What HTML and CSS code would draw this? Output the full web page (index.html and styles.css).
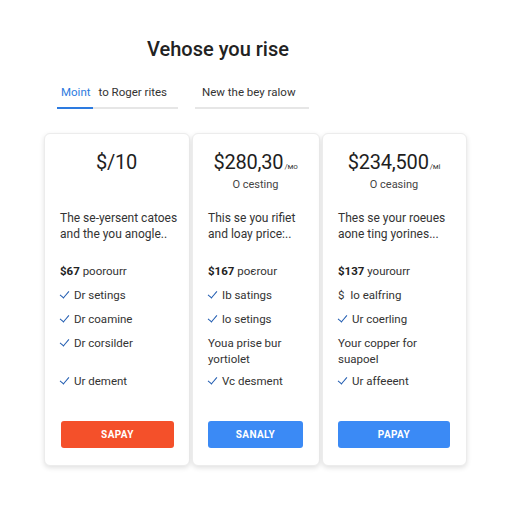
FILE: index.html
```html
<!DOCTYPE html>
<html>
<head>
<meta charset="utf-8">
<link rel="stylesheet" href="styles.css">
</head>
<body>
<div class="page">
  <h1 class="title">Vehose you rise</h1>
  <div class="tabs">
    <div class="tab tab-first">
      <span class="tab-active">Moint</span><span class="tab-rest">to Roger rites</span>
      <div class="tab-line"><div class="tab-line-active"></div></div>
    </div>
    <div class="tab tab-second">
      <span class="tab-rest">New the bey ralow</span>
      <div class="tab-line"></div>
    </div>
  </div>
  <div class="cards">
    <div class="card">
      <div class="price">$/10</div>
      <div class="sub">&nbsp;</div>
      <p class="desc">The se-yersent catoes<br>and the you anogle..</p>
      <ul class="features">
        <li class="lead"><b>$67</b> poorourr</li>
        <li class="check">Dr setings</li>
        <li class="check">Dr coamine</li>
        <li class="check tall">Dr corsilder</li>
        <li class="check">Ur dement</li>
      </ul>
      <button class="btn btn-red">SAPAY</button>
    </div>
    <div class="card">
      <div class="price">$280,30<span class="per">/мо</span></div>
      <div class="sub">O cesting</div>
      <p class="desc">This se you rifiet<br>and loay price:..</p>
      <ul class="features">
        <li class="lead"><b>$167</b> poєrour</li>
        <li class="check">Ib satings</li>
        <li class="check">lo setings</li>
        <li class="plain tall">Youa prise bur<br>yortiolet</li>
        <li class="check">Vc desment</li>
      </ul>
      <button class="btn btn-blue">SANALY</button>
    </div>
    <div class="card">
      <div class="price">$234,500<span class="per">/мі</span></div>
      <div class="sub">O ceasing</div>
      <p class="desc">Thes se your roeues<br>aone ting yorines...</p>
      <ul class="features">
        <li class="lead"><b>$137</b> yourourr</li>
        <li class="plain">$&nbsp; Io ealfring</li>
        <li class="check">Ur coerling</li>
        <li class="plain tall">Your copper for<br>suapoel</li>
        <li class="check">Ur affeeent</li>
      </ul>
      <button class="btn btn-blue">PAPAY</button>
    </div>
  </div>
</div>
</body>
</html>
```
FILE: styles.css
```css
* { box-sizing: border-box; }
html, body { margin: 0; padding: 0; background: #fff; }
body {
  font-family: Roboto, "Liberation Sans", Arial, sans-serif;
  color: #333;
  width: 512px;
  height: 512px;
  overflow: hidden;
}
.page { padding-top: 37px; }
.title {
  margin: 0 0 0 147px;
  font-size: 20px;
  line-height: 24px;
  font-weight: 500;
  color: #222;
}
.tabs {
  display: flex;
  margin-top: 23px;
  padding-left: 57px;
  gap: 17px;
}
.tab { font-size: 11.5px; line-height: 16px; }
.tab-first { width: 121px; }
.tab-second { width: 114px; }
.tab-active { color: #2d7be0; margin-left: 4px; margin-right: 8px; }
.tab-second .tab-rest { margin-left: 7px; }
.tab-rest { color: #333; }
.tab-line {
  margin-top: 7px;
  height: 2px;
  background: #e6e6e6;
}
.tab-line-active { width: 36px; height: 2px; background: #2d7be0; }
.cards {
  display: grid;
  grid-template-columns: 146px 128px 145px;
  gap: 2px;
  margin-top: 24px;
  margin-left: 44px;
}
.card {
  background: #fff;
  border: 1px solid #ececec;
  border-radius: 6px;
  box-shadow: 0 2px 5px rgba(0,0,0,0.12);
  padding: 16px 16px 17px 15px;
  display: flex;
  flex-direction: column;
}
.price {
  text-align: center;
  font-size: 20px;
  line-height: 24px;
  height: 24px;
  color: #1e1e1e;
  letter-spacing: -0.2px;
}
.per { font-size: 8px; line-height: 1; margin-left: 1px; color: #444; }
.sub {
  margin-top: 3px;
  text-align: center;
  font-size: 11px;
  line-height: 16px;
  height: 16px;
  color: #444;
}
.desc {
  margin: 17px 0 0;
  font-size: 12px;
  line-height: 16px;
  color: #333;
  white-space: nowrap;
}
.features {
  list-style: none;
  margin: 21px 0 0;
  padding: 0;
  font-size: 11.5px;
  line-height: 16px;
  color: #333;
  white-space: nowrap;
}
.features li { margin-bottom: 8px; }
.features li.tall { min-height: 32px; margin-bottom: 6px; }
.features li:last-child { margin-bottom: 0; }
.lead b { font-weight: 700; color: #222; }
.check::before {
  content: "";
  display: inline-block;
  width: 4px;
  height: 8px;
  border-right: 1.6px solid #1f5bb0;
  border-bottom: 1.6px solid #1f5bb0;
  transform: rotate(40deg);
  margin: 0 7px -1px 2px;
  position: relative;
  top: -2px;
}
.btn {
  margin-top: 32px;
  height: 27px;
  border: none;
  border-radius: 3px;
  color: #fff;
  font-family: Roboto, "Liberation Sans", Arial, sans-serif;
  font-size: 10px;
  font-weight: 700;
  letter-spacing: 0.4px;
  width: 100%;
}
.btn-red { background: #f4502a; margin-left: 1px; }
.btn-blue { background: #3b8af5; }
```
